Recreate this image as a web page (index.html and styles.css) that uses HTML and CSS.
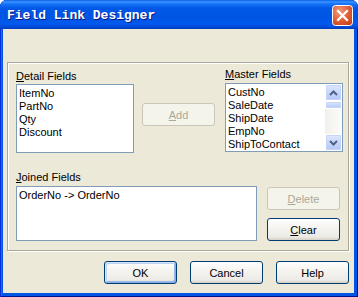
FILE: index.html
```html
<!DOCTYPE html>
<html lang="en">
<head>
<meta charset="UTF-8">
<title>Field Link Designer</title>
<link rel="stylesheet" href="styles.css">
</head>
<body>

<div class="window">
    <div class="titlebar">
        <span class="title">Field Link Designer</span>
        <span class="close-btn">
            <svg width="21" height="21" viewBox="0 0 21 21">
                <defs>
                    <radialGradient id="closeBg" cx="0.35" cy="0.3" r="0.9">
                        <stop offset="0" stop-color="#f09a7c"/>
                        <stop offset="0.55" stop-color="#de5c33"/>
                        <stop offset="1" stop-color="#c23c14"/>
                    </radialGradient>
                </defs>
                <rect x="0.5" y="0.5" width="20" height="20" rx="3" fill="url(#closeBg)" stroke="#fff"/>
                <path d="M6 6 L15 15 M15 6 L6 15" stroke="#fff" stroke-width="2.2" stroke-linecap="square"/>
            </svg>
        </span>
    </div>
    <div class="client">
        <div class="panel">
            <div class="top-row">
                <div class="field-col detail-col">
                    <div class="label"><u>D</u>etail Fields</div>
                    <div class="listbox">
                        <div class="item">ItemNo</div>
                        <div class="item">PartNo</div>
                        <div class="item">Qty</div>
                        <div class="item">Discount</div>
                    </div>
                </div>
                <button class="btn add-btn" disabled><u>A</u>dd</button>
                <div class="field-col master-col">
                    <div class="label"><u>M</u>aster Fields</div>
                    <div class="listbox has-scroll">
                        <div class="items">
                            <div class="item">CustNo</div>
                            <div class="item">SaleDate</div>
                            <div class="item">ShipDate</div>
                            <div class="item">EmpNo</div>
                            <div class="item">ShipToContact</div>
                        </div>
                        <div class="scrollbar">
                            <div class="sb-btn">
                                <svg width="9" height="6" viewBox="0 0 9 6"><path d="M1 5 L4.5 1.5 L8 5" fill="none" stroke="#4d6185" stroke-width="2"/></svg>
                            </div>
                            <div class="sb-track"><div class="sb-thumb"></div></div>
                            <div class="sb-btn">
                                <svg width="9" height="6" viewBox="0 0 9 6"><path d="M1 1 L4.5 4.5 L8 1" fill="none" stroke="#4d6185" stroke-width="2"/></svg>
                            </div>
                        </div>
                    </div>
                </div>
            </div>
            <div class="bottom-row">
                <div class="joined-col">
                    <div class="label"><u>J</u>oined Fields</div>
                    <div class="memo">OrderNo -&gt; OrderNo</div>
                </div>
                <div class="side-buttons">
                    <button class="btn" disabled><u>D</u>elete</button>
                    <button class="btn"><u>C</u>lear</button>
                </div>
            </div>
        </div>
        <div class="dialog-buttons">
            <button class="btn default-btn">OK</button>
            <button class="btn">Cancel</button>
            <button class="btn">Help</button>
        </div>
    </div>
</div>

</body>
</html>
```

FILE: styles.css
```css
body {
    margin: 0;
    background-color: #fff;
    font-family: "Liberation Sans", Arial, sans-serif;
    font-size: 11px;
    line-height: 13px;
    color: #000;
}
.window {
    width: 358px;
    height: 297px;
    box-sizing: border-box;
    padding: 0 4px 4px 3px;
    background-color: #0055e5;
    border-radius: 7px 7px 0 0;
    box-shadow: inset 1px 0 #0831d9, inset -1px 0 #00138c, inset 0 -1px #00138c, inset 2px 0 #166aee;
    display: flex;
    flex-direction: column;
}
.titlebar {
    height: 29px;
    margin: 0 -4px 0 -3px;
    border-radius: 7px 7px 0 0;
    background: linear-gradient(#0a5fe8 0%, #3d95ff 7%, #1a78fc 12%, #0058e6 28%, #0054e3 60%, #005aed 82%, #004bd9 93%, #003cb8 100%);
    display: flex;
    justify-content: space-between;
    align-items: flex-start;
}
.title {
    padding: 8px 0 0 7px;
    font-family: "Liberation Mono", "DejaVu Sans Mono", monospace;
    font-weight: bold;
    font-size: 13px;
    line-height: 15px;
    color: #fff;
    text-shadow: 1px 1px #0a1883;
}
.close-btn {
    margin: 5px 5px 0 0;
    width: 21px;
    height: 21px;
}
.close-btn svg {
    display: block;
}
.client {
    flex: 1;
    background-color: #ece9d8;
    padding: 33px 5px 0 4px;
}
.panel {
    height: 189px;
    box-sizing: border-box;
    border: 1px solid #aca899;
    box-shadow: 1px 1px 0 #fff, inset 1px 1px 0 #fff;
    padding: 5px 0 0 8px;
}
.top-row {
    display: flex;
    align-items: flex-start;
}
.field-col {
    width: 118px;
}
.detail-col {
    margin-top: 2px;
}
.detail-col .listbox {
    margin-top: 1px;
}
.master-col {
    margin-left: 10px;
}
.master-col .listbox {
    margin-top: 2px;
}
.label {
    height: 13px;
    white-space: nowrap;
}
.listbox {
    height: 69px;
    box-sizing: border-box;
    border: 1px solid #7f9db9;
    background-color: #fff;
    padding: 2px 0 0 2px;
}
.listbox.has-scroll {
    display: flex;
    padding: 0;
}
.items {
    flex: 1;
    padding: 2px 0 0 2px;
}
.item {
    height: 13px;
    white-space: nowrap;
}
.scrollbar {
    width: 17px;
    display: flex;
    flex-direction: column;
    background-color: #f8f8f5;
}
.sb-btn, .sb-thumb {
    box-sizing: border-box;
    border: 1px solid #fff;
    border-radius: 2px;
    background: linear-gradient(#dfe8fd, #c3d3fb 60%, #b2c6f7);
    box-shadow: inset 0 0 0 1px #c5d4f8;
}
.sb-btn {
    height: 17px;
    display: flex;
    align-items: center;
    justify-content: center;
}
.sb-track {
    flex: 1;
    background: linear-gradient(to right, #f1f0eb, #fcfcfa);
}
.sb-thumb {
    height: 8px;
}
.btn {
    width: 73px;
    height: 23px;
    box-sizing: border-box;
    padding: 0;
    border: 1px solid #003c74;
    border-radius: 3px;
    background: linear-gradient(#fff 0%, #f5f4f0 40%, #ecebe6 85%, #d6d0c5 100%);
    font-family: "Liberation Sans", Arial, sans-serif;
    font-size: 11px;
    color: #000;
}
.btn:disabled {
    border-color: #c9c7ba;
    background: #f5f4ea;
    color: #aca899;
}
.add-btn {
    margin: 35px 0 0 8px;
}
.bottom-row {
    display: flex;
    margin-top: 18px;
}
.joined-col {
    width: 241px;
}
.memo {
    margin-top: 2px;
    height: 55px;
    box-sizing: border-box;
    border: 1px solid #7f9db9;
    background-color: #fff;
    padding: 2px 0 0 2px;
}
.side-buttons {
    margin: 16px 0 0 10px;
    display: flex;
    flex-direction: column;
    gap: 8px;
}
.dialog-buttons {
    margin-top: 10px;
    display: flex;
    justify-content: flex-end;
    gap: 13px;
}
.default-btn {
    box-shadow: inset 1px 1px 0 #cee7ff, inset -1px -1px 0 #89ade4, inset 2px 2px 0 #bcd4f6, inset -2px -2px 0 #98b8ea;
}
```
